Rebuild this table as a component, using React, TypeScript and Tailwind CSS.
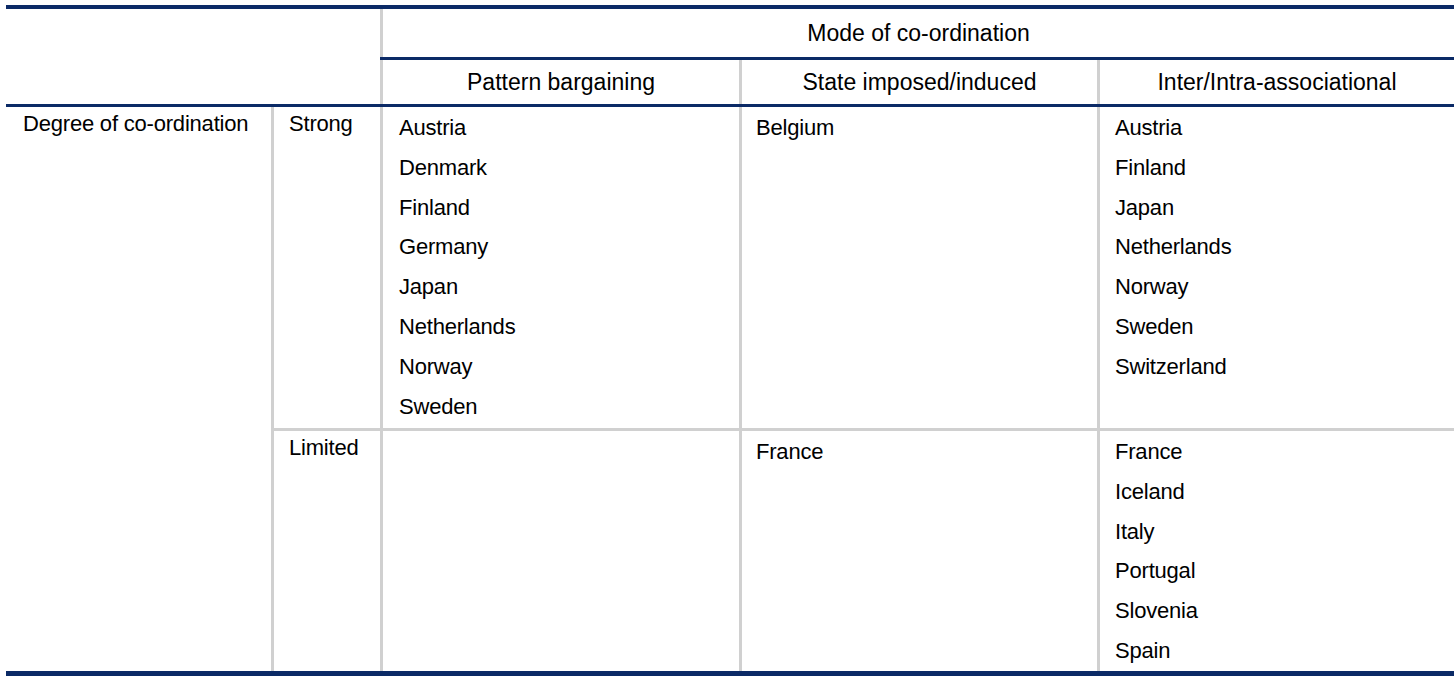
const strong = {
  pattern: ["Austria", "Denmark", "Finland", "Germany", "Japan", "Netherlands", "Norway", "Sweden"],
  state: ["Belgium"],
  inter: ["Austria", "Finland", "Japan", "Netherlands", "Norway", "Sweden", "Switzerland"],
};

const limited = {
  pattern: [] as string[],
  state: ["France"],
  inter: ["France", "Iceland", "Italy", "Portugal", "Slovenia", "Spain"],
};

function List({ items, label }: { items: string[]; label?: boolean }) {
  return (
    <div className={label ? "-mt-[3px]" : "pt-px"}>
      {items.map((c, i) => (
        <div key={i} className="leading-[39.8px] whitespace-nowrap">
          {c}
        </div>
      ))}
    </div>
  );
}

function BodyRow({
  label,
  data,
  height,
}: {
  label: string;
  data: { pattern: string[]; state: string[]; inter: string[] };
  height: string;
}) {
  return (
    <div className={`flex ${height}`}>
      <div className="w-[106px] pl-[15px]">
        <List items={[label]} label />
      </div>
      <div className="w-[359px] border-l-[3px] border-[#d0d0d0] pl-[16px]">
        <List items={data.pattern} />
      </div>
      <div className="w-[358px] border-l-[3px] border-[#d0d0d0] pl-[14px]">
        <List items={data.state} />
      </div>
      <div className="flex-1 border-l-[3px] border-[#d0d0d0] pl-[15px]">
        <List items={data.inter} />
      </div>
    </div>
  );
}

export default function App() {
  return (
    <div
      className="w-[1456px] h-[678px] bg-white text-black text-[22px] tracking-[-0.2px] overflow-hidden"
      style={{ fontFamily: '"Liberation Sans", Arial, sans-serif' }}
    >
      <div className="ml-[6px] mt-[5px] w-[1448px] border-t-4 border-b-[5px] border-[#0b2a66]">
        {/* header */}
        <div className="flex text-[23px] tracking-normal">
          <div className="w-[374px]" />
          <div className="flex-1 flex flex-col border-l-[3px] border-[#d0d0d0]">
            <div className="h-[48px] flex items-center justify-center pt-px">Mode of co-ordination</div>
            <div className="h-[3px] bg-[#0b2a66] -ml-[3px]" />
            <div className="flex h-[44px]">
              <div className="w-[356px] flex items-center justify-center">Pattern bargaining</div>
              <div className="w-[358px] border-l-[3px] border-[#d0d0d0] flex items-center justify-center">
                State imposed/induced
              </div>
              <div className="flex-1 border-l-[3px] border-[#d0d0d0] flex items-center justify-center">
                Inter/Intra-associational
              </div>
            </div>
          </div>
        </div>
        <div className="h-[3px] bg-[#0b2a66]" />

        {/* body */}
        <div className="flex">
          <div className="w-[265px] pl-[17px]">
            <List items={["Degree of co-ordination"]} label />
          </div>
          <div className="flex-1 flex flex-col border-l-[3px] border-[#d0d0d0]">
            <BodyRow label="Strong" data={strong} height="h-[321px]" />
            <div className="h-[3px] bg-[#d0d0d0] -ml-[3px]" />
            <BodyRow label="Limited" data={limited} height="h-[240px]" />
          </div>
        </div>
      </div>
    </div>
  );
}
